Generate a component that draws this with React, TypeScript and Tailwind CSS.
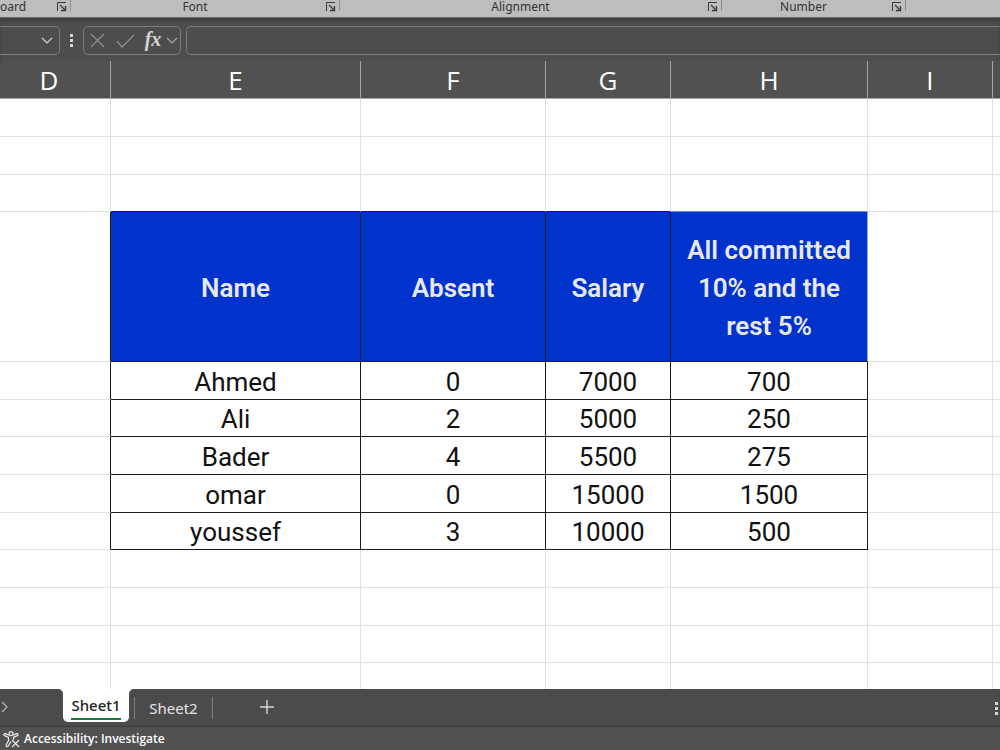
import { useState } from "react";
import clsx from "clsx";

interface SheetRow {
  height: string;
  cells?: string[];
  header?: boolean;
  beforeTable?: boolean;
}

const columns = [
  { name: "D", width: "w-[111px]" },
  { name: "E", width: "w-[250px]" },
  { name: "F", width: "w-[185px]" },
  { name: "G", width: "w-[125px]" },
  { name: "H", width: "w-[197px]" },
  { name: "I", width: "w-[125px]" },
  { name: "", width: "" },
];

const rows: SheetRow[] = [
  { height: "h-[38px]" },
  { height: "h-[38px]" },
  { height: "h-[37px]", beforeTable: true },
  { height: "h-[150px]", header: true, cells: ["Name", "Absent", "Salary", "All committed 10% and the rest 5%"] },
  { height: "h-[38px]", cells: ["Ahmed", "0", "7000", "700"] },
  { height: "h-[37px]", cells: ["Ali", "2", "5000", "250"] },
  { height: "h-[38px]", cells: ["Bader", "4", "5500", "275"] },
  { height: "h-[38px]", cells: ["omar", "0", "15000", "1500"] },
  { height: "h-[37px]", cells: ["youssef", "3", "10000", "500"] },
  { height: "h-[38px]" },
  { height: "h-[38px]" },
  { height: "h-[37px]" },
  { height: "h-[37px]" },
];

const ribbonGroups = [
  { label: "oard", width: "w-[71px]" },
  { label: "Font", width: "w-[269px]" },
  { label: "Alignment", width: "w-[382px]" },
  { label: "Number", width: "w-[184px]" },
];

function LauncherIcon() {
  return (
    <svg width="10" height="10" viewBox="0 0 10 10" fill="none" stroke="#3a3a3a" aria-hidden="true">
      <path d="M0.5 9V0.5H9" />
      <path d="M3 3l5 5" strokeWidth="1.2" />
      <path d="M8.5 4v4.5H4" strokeWidth="1.4" />
    </svg>
  );
}

function Chevron() {
  return (
    <svg width="12" height="7" viewBox="0 0 12 7" fill="none" stroke="currentColor" strokeWidth="1.2" aria-hidden="true">
      <path d="M1 1l5 5 5-5" />
    </svg>
  );
}

function Dots({ className }: { className?: string }) {
  return (
    <span className={clsx("flex flex-col gap-[2px]", className)}>
      <span className="h-[3px] w-[3px] bg-[#d6d6d6]" />
      <span className="h-[3px] w-[3px] bg-[#d6d6d6]" />
      <span className="h-[3px] w-[3px] bg-[#d6d6d6]" />
    </span>
  );
}

function Ribbon() {
  return (
    <div className="flex h-[18px] shrink-0 border-b border-[#6b6b6b] bg-[#bdbdbd] text-xs text-[#333]">
      {ribbonGroups.map((group) => (
        <div key={group.label} className={clsx("flex shrink-0", group.width)}>
          <span className={clsx("flex-1 leading-[14px]", group.label === "oard" ? "text-left" : "text-center")}>
            {group.label}
          </span>
          <button aria-label={`${group.label} settings`} className="flex h-3 w-5 shrink-0 items-end justify-end pr-[3px]">
            <LauncherIcon />
          </button>
          <span className="h-[11px] w-px shrink-0 bg-[#8f8f8f]" />
        </div>
      ))}
    </div>
  );
}

function FormulaBar() {
  return (
    <div className="flex h-[43px] shrink-0 items-start bg-[#4d4d4d] pt-2 text-[#d6d6d6] shadow-[inset_0_3px_3px_#3f3f3f]">
      <div className="flex h-[29px] w-[60px] items-center rounded-r-[5px] border border-l-0 border-[#7c7c7c]">
        <input aria-label="Name box" className="w-[41px] bg-transparent outline-none" />
        <button aria-label="Open name list">
          <Chevron />
        </button>
      </div>
      <Dots className="ml-[10px] mt-2" />
      <div className="ml-[10px] flex h-[29px] w-[98px] shrink-0 items-center rounded-[5px] border border-[#7c7c7c]">
        <button aria-label="Cancel" className="ml-[6px]">
          <svg width="15" height="15" viewBox="0 0 15 15" fill="none" stroke="#8f8f8f" strokeWidth="1.2">
            <path d="M1 1l13 13M14 1L1 14" />
          </svg>
        </button>
        <button aria-label="Enter" className="ml-[11px]">
          <svg width="19" height="14" viewBox="0 0 19 14" fill="none" stroke="#8f8f8f" strokeWidth="1.3">
            <path d="M1 7l5 6L18 1" />
          </svg>
        </button>
        <button
          aria-label="Insert function"
          className="ml-2 w-5 pb-1 text-center font-['Liberation_Serif',serif] text-[20px] leading-6 font-bold italic"
        >
          fx
        </button>
        <button aria-label="Function list" className="ml-[3px] text-[#a8a8a8]">
          <Chevron />
        </button>
      </div>
      <input
        aria-label="Formula"
        className="ml-[5px] h-[29px] min-w-0 flex-1 rounded-l-[5px] border border-r-0 border-[#7c7c7c] bg-transparent px-2 outline-none"
      />
    </div>
  );
}

function Grid() {
  return (
    <main className="min-h-0 flex-1 overflow-hidden bg-white">
      <table className="w-full table-fixed border-separate border-spacing-0">
        <thead className="font-['Open_Sans',sans-serif]">
          <tr className="h-[38px] bg-[#515151] text-[26px] leading-8 text-white">
            {columns.map((col, i) => (
              <th
                key={i}
                className={clsx(
                  "border-b border-[#a6a6a6] py-0 pl-0 text-center font-normal",
                  col.width,
                  i < 6 && "border-r",
                  i === 0 ? "pr-3" : "pr-0"
                )}
              >
                {col.name}
              </th>
            ))}
          </tr>
        </thead>
        <tbody className="font-[Roboto,sans-serif] text-[26px] leading-8 text-[#111]">
          {rows.map((row, r) => (
            <tr key={r} className={row.height}>
              {columns.map((_, c) => {
                const inTable = c >= 1 && c <= 4;
                const filled = Boolean(row.cells) && inTable;
                const last = c === 4;
                const Cell = filled && row.header ? "th" : "td";
                return (
                  <Cell
                    key={c}
                    className={clsx(
                      "border-b pt-[2px] pb-0 text-center",
                      c < 6 && "border-r",
                      filled && row.header ? "bg-[#0033cc] px-3 leading-[38px] font-semibold text-[#e8e8e8]" : "px-0",
                      filled || (row.beforeTable && inTable && !last)
                        ? "border-b-[#1c1c1c]"
                        : row.beforeTable && last
                          ? "border-b-[#6f8ae0]"
                          : "border-b-[#e1e1e1]",
                      filled && row.header && last
                        ? "border-r-[#8fa3e8]"
                        : filled || (row.cells && c === 0)
                          ? "border-r-[#1c1c1c]"
                          : "border-r-[#e1e1e1]"
                    )}
                  >
                    {filled && row.cells![c - 1]}
                  </Cell>
                );
              })}
            </tr>
          ))}
        </tbody>
      </table>
    </main>
  );
}

function SheetTabs() {
  const [active, setActive] = useState("Sheet1");

  return (
    <nav className="flex h-[38px] shrink-0 items-start border-b border-[#3b3b3b] bg-[#4b4b4b] text-[15px] text-[#e6e6e6]">
      <button aria-label="Next sheet" className="mt-3 w-[58px]">
        <svg width="9" height="12" viewBox="0 0 9 12" fill="none" stroke="#b5b5b5" strokeWidth="1.3">
          <path d="M2 1l5 5-5 5" />
        </svg>
      </button>
      {["Sheet1", "Sheet2"].map((sheet) => (
        <div key={sheet} className="flex items-start">
          {active === sheet ? (
            <>
              <svg width="5" height="5" viewBox="0 0 5 5" fill="white" aria-hidden="true">
                <path d="M0 0h5v5a5 5 0 0 0-5-5z" />
              </svg>
              <button className="flex h-[33px] w-[66px] items-start justify-center rounded-b-[5px] bg-white pt-[5px] text-[#222]">
                <span className="border-b-2 border-[#107c41] pb-[2px] leading-[22px] font-medium">{sheet}</span>
              </button>
              <svg width="5" height="5" viewBox="0 0 5 5" fill="white" aria-hidden="true">
                <path d="M5 0H0v5a5 5 0 0 1 5-5z" />
              </svg>
            </>
          ) : (
            <button onClick={() => setActive(sheet)} className="mt-[7px] w-[77px] leading-6">
              {sheet}
            </button>
          )}
          <span className="mt-2 h-[22px] w-px bg-[#808080]" />
        </div>
      ))}
      <button aria-label="New sheet" className="mt-[11px] ml-[47px]">
        <svg width="14" height="14" viewBox="0 0 14 14" fill="none" stroke="#d6d6d6" strokeWidth="1.4">
          <path d="M7 0v14M0 7h14" />
        </svg>
      </button>
      <Dots className="mt-[13px] ml-auto mr-[2px]" />
    </nav>
  );
}

function StatusBar() {
  return (
    <footer className="flex h-[23px] shrink-0 items-center bg-[#515151] pt-px pl-[3px] text-white">
      <button className="flex items-center gap-1 font-['Open_Sans',sans-serif] text-xs font-semibold">
        <svg width="17" height="17" viewBox="0 0 17 17" fill="none" stroke="#ececec" strokeWidth="1.2" aria-hidden="true">
          <circle cx="8" cy="2.7" r="2" />
          <path d="M6 4.2L2.5 2.6C1 2.2.3 4 1.6 4.6L5.5 6.5v3L3.2 14c-.4 1.5 1.4 2.3 2.1 1L8 10.5" />
          <path d="M10 4.2l3.5-1.6c1.5-.4 2.2 1.4.9 2L10.5 6.5v2.2" />
          <path d="M9 9l7 7M16 9l-7 7" />
        </svg>
        Accessibility: Investigate
      </button>
    </footer>
  );
}

export default function App() {
  return (
    <div className="flex h-screen flex-col overflow-hidden font-['Noto_Sans',sans-serif]">
      <Ribbon />
      <FormulaBar />
      <Grid />
      <SheetTabs />
      <StatusBar />
    </div>
  );
}
